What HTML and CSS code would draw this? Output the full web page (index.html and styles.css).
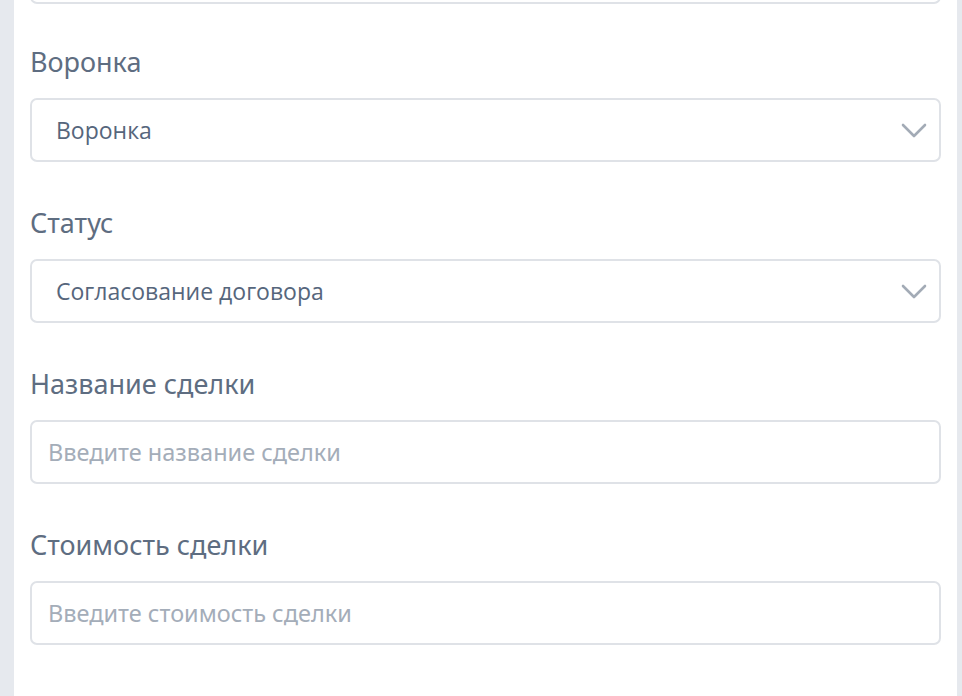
FILE: index.html
```html
<!DOCTYPE html>
<html lang="ru">
<head>
<meta charset="utf-8">
<link rel="stylesheet" href="styles.css">
</head>
<body>
<div class="page">
  <div class="panel">
    <div class="top-box"></div>
    <div class="field">
      <div class="label">Воронка</div>
      <div class="select"><span class="value">Воронка</span>
        <svg class="chev" width="26" height="16" viewBox="0 0 26 16"><path d="M2 2 L13 13 L24 2" fill="none" stroke="#a3abb6" stroke-width="2.6" stroke-linecap="round" stroke-linejoin="round"/></svg>
      </div>
    </div>
    <div class="field">
      <div class="label">Статус</div>
      <div class="select"><span class="value">Согласование договора</span>
        <svg class="chev" width="26" height="16" viewBox="0 0 26 16"><path d="M2 2 L13 13 L24 2" fill="none" stroke="#a3abb6" stroke-width="2.6" stroke-linecap="round" stroke-linejoin="round"/></svg>
      </div>
    </div>
    <div class="field">
      <div class="label">Название сделки</div>
      <div class="input"><span class="placeholder">Введите название сделки</span></div>
    </div>
    <div class="field">
      <div class="label">Стоимость сделки</div>
      <div class="input"><span class="placeholder">Введите стоимость сделки</span></div>
    </div>
  </div>
</div>
</body>
</html>
```

FILE: styles.css
```css
html, body {
  margin: 0;
  padding: 0;
  height: 100%;
}
body {
  background: #e6e9ee;
  font-family: "Noto Sans", "Open Sans", sans-serif;
  overflow: hidden;
}
.page {
  display: flex;
  height: 696px;
  padding: 0 5px 0 14px;
}
.panel {
  flex: 1;
  background: #ffffff;
  padding: 0 16px 0 16px;
  display: flex;
  flex-direction: column;
}
.top-box {
  height: 40px;
  margin-top: -40px;
  border: 2px solid #dfe2e7;
  border-radius: 7px;
  flex: none;
}
.field {
  display: flex;
  flex-direction: column;
  margin-top: 43px;
}
.top-box + .field { margin-top: 40px; }
.label {
  font-size: 27px;
  line-height: 36px;
  color: #5e6d81;
  margin-bottom: 18px;
}
.select, .input {
  height: 64px;
  box-sizing: border-box;
  border: 2px solid #dfe2e7;
  border-radius: 7px;
  display: flex;
  align-items: center;
}
.select { padding: 0 12px 0 24px; justify-content: space-between; }
.input { padding: 0 16px; }
.value {
  font-family: "Open Sans", "Noto Sans", sans-serif;
  font-size: 23px;
  font-weight: 500;
  color: #56667c;
}
.placeholder {
  font-size: 23.5px;
  color: #a4adb9;
}
.chev { flex: none; margin-top: 2px; }
```
